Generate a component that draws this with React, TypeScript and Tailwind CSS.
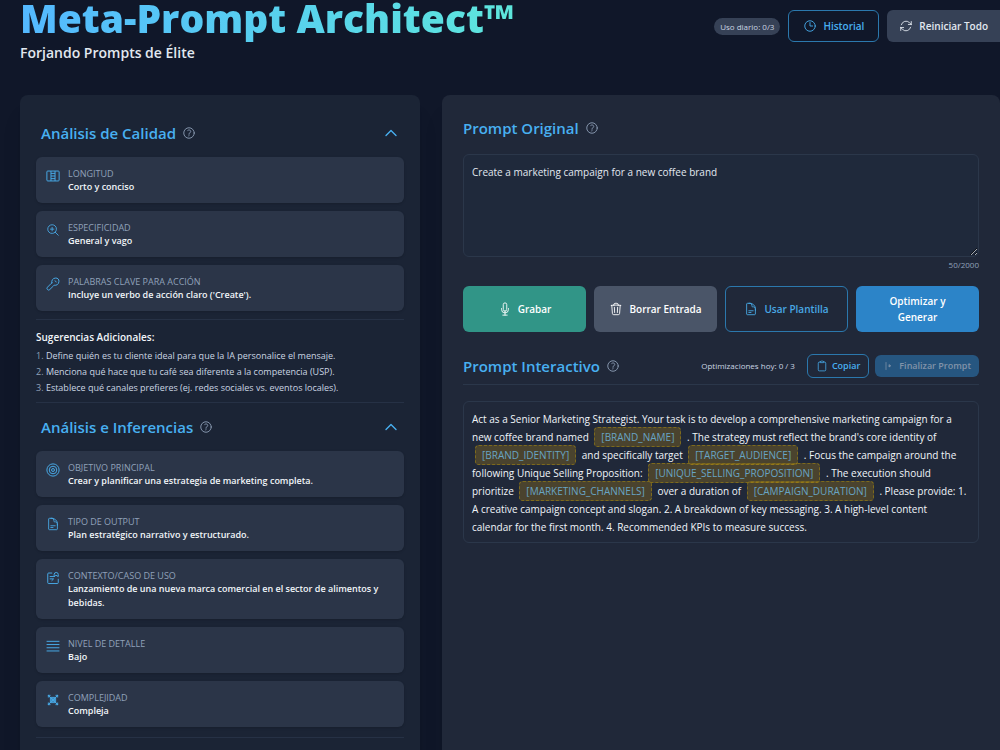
import { useState } from "react";
import type { ReactNode } from "react";
import type { IconType } from "react-icons";
import {
	HiOutlineArrowPath,
	HiOutlineChevronUp,
	HiOutlineClipboard,
	HiOutlineClock,
	HiOutlineDocumentText,
	HiOutlineMagnifyingGlassPlus,
	HiOutlineMicrophone,
	HiOutlineQuestionMarkCircle,
	HiOutlineTrash,
} from "react-icons/hi2";

type IconProps = { className?: string };

function LengthIcon({ className }: IconProps) {
	return (
		<svg viewBox="0 0 24 24" fill="none" stroke="currentColor" strokeWidth="1.7" className={className}>
			<rect x="1.5" y="3.5" width="21" height="17" rx="1.5" />
			<path d="M8.5 3.5v17M15.5 3.5v17M8.5 7.5h7M8.5 12h7M8.5 16.5h7" />
		</svg>
	);
}

function KeyIcon({ className }: IconProps) {
	return (
		<svg viewBox="0 0 24 24" fill="none" stroke="currentColor" strokeWidth="1.7" strokeLinecap="round" strokeLinejoin="round" className={className}>
			<path d="M10 10C9 6 11.5 2 16.5 1.800c3.500-.2 5.900 2.200 5.700 5.700-.2 5-4.200 7.500-8.200 6.500-1 1.500-2 2-3.500 3.500L6.500 21.500a2.800 2.800 0 0 1-4-4L6.500 13.500C8 12 8.500 11 10 10Z" />
			<path d="M15.500 6.500a2.500 2.500 0 0 1 2 2" />
		</svg>
	);
}

function TargetIcon({ className }: IconProps) {
	return (
		<svg viewBox="0 0 24 24" fill="none" stroke="currentColor" strokeWidth="1.7" className={className}>
			<circle cx="12" cy="12" r="10.5" />
			<circle cx="12" cy="12" r="6.5" />
			<circle cx="12" cy="12" r="2.5" />
		</svg>
	);
}

function ContextIcon({ className }: IconProps) {
	return (
		<svg viewBox="0 0 24 24" fill="none" stroke="currentColor" strokeWidth="1.7" strokeLinecap="round" strokeLinejoin="round" className={className}>
			<path d="M10 3.5H4.500A1.500 1.500 0 0 0 3 5v15a1.500 1.500 0 0 0 1.500 1.500h15A1.500 1.500 0 0 0 21 20v-6" />
			<path d="M7 9.500h6M7 13.500h6l-3 3" />
			<path d="M14 9.500V6a3.500 3.500 0 0 1 7 0v3.500l-3.500-2Z" />
		</svg>
	);
}

function DetailIcon({ className }: IconProps) {
	return (
		<svg viewBox="0 0 24 24" fill="none" stroke="currentColor" strokeWidth="1.7" className={className}>
			<path d="M1 4h22M1 9.500h22M1 15h22M1 20.500h22" />
		</svg>
	);
}

function ComplexityIcon({ className }: IconProps) {
	return (
		<svg viewBox="0 0 24 24" fill="none" stroke="currentColor" strokeWidth="1.7" strokeLinecap="round" strokeLinejoin="round" className={className}>
			<path d="M4 4l16 16M20 4 4 20M4 4v3M4 4h3M20 4v3M20 4h-3M4 20v-3M4 20h3M20 20v-3M20 20h-3" />
			<path d="M7 7.500h10M7 16.500h10M7.500 9v6M16.500 9v6" />
			<circle cx="12" cy="12" r="2.500" />
		</svg>
	);
}

function FinalizeIcon({ className }: IconProps) {
	return (
		<svg viewBox="0 0 24 24" fill="none" stroke="currentColor" strokeWidth="1.5" strokeLinecap="round" className={className}>
			<path d="M6 5v14" />
			<path d="M12 10v4l3-2Z" fill="currentColor" />
		</svg>
	);
}

type Item = {
	icon: IconType | ((props: IconProps) => ReactNode);
	label: string;
	value: string;
};

const qualityItems: Item[] = [
	{ icon: LengthIcon, label: "Longitud", value: "Corto y conciso" },
	{ icon: HiOutlineMagnifyingGlassPlus, label: "Especificidad", value: "General y vago" },
	{
		icon: KeyIcon,
		label: "Palabras clave para acción",
		value: "Incluye un verbo de acción claro ('Create').",
	},
];

const inferenceItems: Item[] = [
	{
		icon: TargetIcon,
		label: "Objetivo principal",
		value: "Crear y planificar una estrategia de marketing completa.",
	},
	{
		icon: HiOutlineDocumentText,
		label: "Tipo de output",
		value: "Plan estratégico narrativo y estructurado.",
	},
	{
		icon: ContextIcon,
		label: "Contexto/caso de uso",
		value: "Lanzamiento de una nueva marca comercial en el sector de alimentos y bebidas.",
	},
	{ icon: DetailIcon, label: "Nivel de detalle", value: "Bajo" },
	{ icon: ComplexityIcon, label: "Complejidad", value: "Compleja" },
];

const suggestions = [
	"Define quién es tu cliente ideal para que la IA personalice el mensaje.",
	"Menciona qué hace que tu café sea diferente a la competencia (USP).",
	"Establece qué canales prefieres (ej. redes sociales vs. eventos locales).",
];

const interactivePrompt =
	"Act as a Senior Marketing Strategist. Your task is to develop a comprehensive marketing campaign for a new coffee brand named [BRAND_NAME] . The strategy must reflect the brand's core identity of [BRAND_IDENTITY] and specifically target [TARGET_AUDIENCE] . Focus the campaign around the following Unique Selling Proposition: [UNIQUE_SELLING_PROPOSITION] . The execution should prioritize [MARKETING_CHANNELS] over a duration of [CAMPAIGN_DURATION] . Please provide: 1. A creative campaign concept and slogan. 2. A breakdown of key messaging. 3. A high-level content calendar for the first month. 4. Recommended KPIs to measure success.";

function HelpButton() {
	return (
		<button type="button" aria-label="Ayuda" className="text-slate-400">
			<HiOutlineQuestionMarkCircle className="size-3.5" />
		</button>
	);
}

function Section({ title, children }: { title: string; children: ReactNode }) {
	const [open, setOpen] = useState(true);

	return (
		<section>
			<div className="flex h-12 items-center justify-between px-[5px]">
				<div className="flex items-center gap-1.5">
					<h2 className="text-[15px] leading-6 font-semibold text-[#48b0f1]">{title}</h2>
					<HelpButton />
				</div>
				<button
					type="button"
					aria-label={title}
					aria-expanded={open}
					onClick={() => setOpen(!open)}
					className="text-[#48b0f1]"
				>
					<HiOutlineChevronUp className="size-4 stroke-2" />
				</button>
			</div>
			{open && children}
		</section>
	);
}

function ItemCards({ items }: { items: Item[] }) {
	return (
		<ul className="space-y-2">
			{items.map((item) => (
				<li key={item.label} className="flex gap-2 rounded-md bg-[#2b3548] px-2.5 pt-[11px] pb-[9px] shadow-sm">
					<item.icon className="mt-px size-3.5 shrink-0 text-[#48a9e6]" />
					<div>
						<p className="text-[9px] leading-3 text-slate-400 uppercase">{item.label}</p>
						<p className="text-[9px] leading-[14px] font-semibold text-slate-100">{item.value}</p>
					</div>
				</li>
			))}
		</ul>
	);
}

export default function App() {
	const [prompt, setPrompt] = useState("Create a marketing campaign for a new coffee brand");

	return (
		<div className="min-h-screen overflow-x-hidden bg-[#101729] font-['Open_Sans','Noto_Sans',sans-serif] text-slate-100">
			<header className="flex h-[95px] items-start justify-between pl-5">
				<div>
					<h1 className="bg-linear-to-r from-[#54b8ff] to-[#5ee6dc] bg-clip-text pb-[7px] text-[39px] leading-9 font-extrabold text-transparent">
						Meta-Prompt Architect™
					</h1>
					<p className="text-[14px] leading-5 font-semibold text-slate-200">Forjando Prompts de Élite</p>
				</div>
				<div className="flex items-center gap-2 pt-2.5">
					<span className="rounded-full bg-[#364156] px-1.5 text-[8px] leading-[17px] text-slate-300">
						Uso diario: 0/3
					</span>
					<button
						type="button"
						className="flex h-8 items-center gap-1.5 rounded-md border border-[#2b78ad] px-3.5 text-[10px] font-semibold text-[#48b0f1]"
					>
						<HiOutlineClock className="size-3.5" />
						Historial
					</button>
					<button
						type="button"
						className="flex h-8 items-center gap-1.5 rounded-l-md bg-[#364156] px-3 text-[10px] font-semibold text-slate-200"
					>
						<HiOutlineArrowPath className="size-3.5" />
						Reiniciar Todo
					</button>
				</div>
			</header>

			<main className="grid grid-cols-[400fr_558fr] gap-[22px] pl-5">
				<aside className="rounded-t-lg bg-[#1b2435] px-4 pt-3.5 pb-10 shadow-xl">
					<Section title="Análisis de Calidad">
						<ItemCards items={qualityItems} />
						<div className="mt-2 border-t border-[#263145] pt-2.5">
							<h3 className="text-[10px] leading-[14px] font-semibold text-slate-100">Sugerencias Adicionales:</h3>
							<ol className="mt-1 text-[9px] leading-4 text-slate-300">
								{suggestions.map((text, index) => (
									<li key={text}>
										<span className="text-slate-400">{index + 1}.</span> {text}
									</li>
								))}
							</ol>
						</div>
					</Section>
					<div className="mt-1.5 border-t border-[#263145]">
						<Section title="Análisis e Inferencias">
							<ItemCards items={inferenceItems} />
						</Section>
					</div>
					<hr className="mt-2.5 border-[#263145]" />
				</aside>

				<div className="rounded-t-lg bg-[#202839] px-[21px] pt-[21px] pb-10 shadow-xl">
					<section>
						<div className="flex items-center gap-1.5">
							<h2 className="text-[15px] leading-6 font-semibold text-[#48b0f1]">
								<label htmlFor="prompt">Prompt Original</label>
							</h2>
							<HelpButton />
						</div>
						<textarea
							id="prompt"
							value={prompt}
							maxLength={2000}
							onChange={(event) => setPrompt(event.target.value)}
							className="mt-3.5 block h-[103px] w-full rounded-md border border-[#2b374a] bg-[#1f293b] px-2 py-2 text-[10px] leading-[18px] text-slate-200"
						/>
						<p className="text-right text-[8px] leading-4 text-slate-400">{prompt.length}/2000</p>
						<div className="mt-[13px] grid h-[46px] grid-cols-4 gap-2 text-[10px] leading-4 font-semibold">
							<button
								type="button"
								className="flex items-center justify-center gap-1.5 rounded-md bg-[#319587] text-white"
							>
								<HiOutlineMicrophone className="size-3.5" />
								Grabar
							</button>
							<button
								type="button"
								onClick={() => setPrompt("")}
								className="flex items-center justify-center gap-1.5 rounded-md bg-[#4a5568] text-white"
							>
								<HiOutlineTrash className="size-3.5" />
								Borrar Entrada
							</button>
							<button
								type="button"
								className="flex items-center justify-center gap-1.5 rounded-md border border-[#2b78ad] text-[#48a9e6]"
							>
								<HiOutlineDocumentText className="size-3.5" />
								Usar Plantilla
							</button>
							<button type="button" className="rounded-md bg-[#2c84c8] px-6 text-white">
								Optimizar y Generar
							</button>
						</div>
					</section>

					<section className="mt-[22px]">
						<div className="flex items-center justify-between border-b border-[#2b374a] pb-1.5">
							<div className="flex items-center gap-1.5">
								<h2 className="text-[15px] leading-6 font-semibold text-[#48b0f1]">Prompt Interactivo</h2>
								<HelpButton />
							</div>
							<div className="flex items-center gap-1.5">
								<span className="pr-1.5 text-[8px] text-slate-300">Optimizaciones hoy: 0 / 3</span>
								<button
									type="button"
									className="flex h-6 items-center gap-1 rounded-md border border-[#2b78ad] px-2 text-[9px] font-semibold text-[#48b0f1]"
								>
									<HiOutlineClipboard className="size-3" />
									Copiar
								</button>
								<button
									type="button"
									disabled
									className="flex h-[22px] items-center gap-1 rounded-md bg-[#265680] px-2 text-[9px] font-semibold text-[#8193a9]"
								>
									<FinalizeIcon className="size-3" />
									Finalizar Prompt
								</button>
							</div>
						</div>
						<p className="mt-4 rounded-md border border-[#2b374a] px-2 pt-2 pb-1.5 text-[10px] leading-[18px] text-slate-100">
							{interactivePrompt.split(/(\[[A-Z_]+\])/).map((part, index) =>
								part.startsWith("[") ? (
									<span
										key={index}
										className="mx-[3px] rounded-sm border border-dashed border-[#7d6a1c] bg-yellow-500/20 px-1.5 py-0.5 text-[#68a4c4]"
									>
										{part}
									</span>
								) : (
									part
								),
							)}
						</p>
					</section>
				</div>
			</main>
		</div>
	);
}
